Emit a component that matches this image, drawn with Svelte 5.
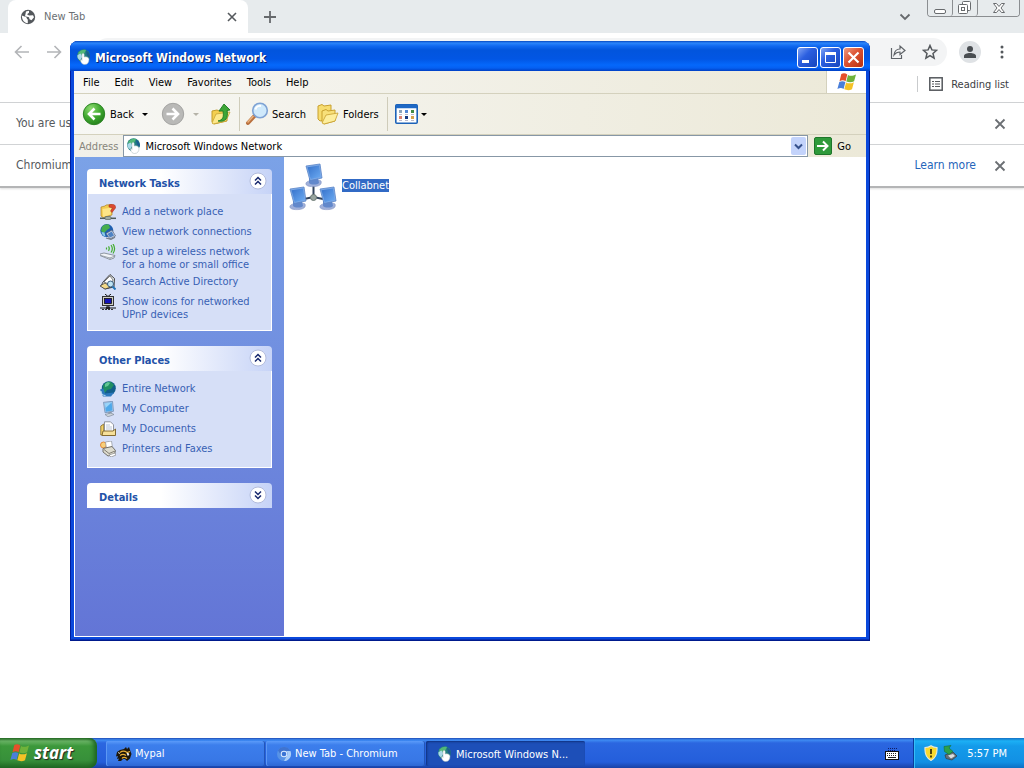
<script>
  const menus = ['File', 'Edit', 'View', 'Favorites', 'Tools', 'Help'];
  const panels = [
    {
      title: 'Network Tasks',
      open: true,
      items: [
        { icon: 'addplace', lines: ['Add a network place'] },
        { icon: 'connections', lines: ['View network connections'] },
        { icon: 'wireless', lines: ['Set up a wireless network', 'for a home or small office'] },
        { icon: 'directory', lines: ['Search Active Directory'] },
        { icon: 'upnp', lines: ['Show icons for networked', 'UPnP devices'] }
      ]
    },
    {
      title: 'Other Places',
      open: true,
      items: [
        { icon: 'entire', lines: ['Entire Network'] },
        { icon: 'computer', lines: ['My Computer'] },
        { icon: 'documents', lines: ['My Documents'] },
        { icon: 'printers', lines: ['Printers and Faxes'] }
      ]
    },
    { title: 'Details', open: false, items: [] }
  ];
  const tasks = [
    { icon: 'mypal', label: 'Mypal', active: false },
    { icon: 'chromium', label: 'New Tab - Chromium', active: false },
    { icon: 'network', label: 'Microsoft Windows N...', active: true }
  ];
  let address = $state('Microsoft Windows Network');
</script>

{#snippet closeX()}
  <svg width="12" height="12" viewBox="0 0 12 12" aria-hidden="true"><path d="M1.500 1.500l9 9M10.500 1.500l-9 9" stroke="#6b6f73" stroke-width="1.800" /></svg>
{/snippet}

{#snippet flag(size)}
  <svg width={size} height={size} viewBox="0 0 20 20" aria-hidden="true">
    <path d="M4.300 2C6.500 .8 8.500 1.200 10.300 2.400L8.600 9.200C6.700 8 4.800 8 2.500 9.200z" fill="#e5502a" />
    <path d="M11 2.900C13 4.100 15.700 4.200 19 2.500L17.100 9.300C14.700 10.600 11.700 10.400 9.300 9.500z" fill="#6fb23a" />
    <path d="M2.300 10C4.500 8.900 6.500 9 8.400 10.100L6.600 17C4.700 15.700 2.800 15.800 .4 17z" fill="#4a7fd9" />
    <path d="M9.100 10.500C11 11.600 13.900 11.800 16.900 10.200L15 17.200C12.500 18.600 9.500 18.300 7.300 17.300z" fill="#f4c226" />
  </svg>
{/snippet}

{#snippet icon(name)}
  <svg class="ico" width="16" height="16" viewBox="0 0 16 16" aria-hidden="true">
    {#if name === 'network'}
      <circle cx="7.500" cy="6.800" r="6.500" fill="#23807f" />
      <path d="M2 4C4 1 8 0 10 1L8 5 4 7z" fill="#52b878" />
      <path d="M10 1.500C13 3 14.500 6 13.500 9L11 7z" fill="#1b5c90" />
      <path d="M1.500 6l3-1.500 2 3-2.500 4C2 10 1 8.500 1.500 6z" fill="#a9d9e8" />
      <path d="M6 5.500c0-1.500 2.200-1.500 2.200 0V8c2-.6 4.800 0 4.800 2.500 0 3-1.500 5-4.500 5-2 0-3.500-1.500-4-4 0-1.500 1.500-1 1.500 0z" fill="#fff" stroke="#a5b4b8" stroke-width=".5" />
    {:else if name === 'addplace'}
      <path d="M1 3l4-1 1-1 6-.5V11L3 13.500 1 12z" fill="#f3cc50" stroke="#ae8326" stroke-width=".7" />
      <path d="M2.500 5L12 3.500l-1.500 7L3 13z" fill="#fde587" />
      <path d="M9 1c3-1.500 7-1 6.500 3L12 8.500 10.500 7 12.500 4 9 3z" fill="#dc4a30" stroke="#a12c20" stroke-width=".5" />
      <path d="M0 14.300h16" stroke="#4f5d5b" stroke-width="1.500" /><rect x="5" y="12.500" width="6" height="3" rx="1" fill="#9faba1" stroke="#4f5b55" stroke-width=".6" />
    {:else if name === 'connections'}
      <circle cx="6.800" cy="6.600" r="6.500" fill="#1e5fb0" />
      <path d="M2 2.800C5 0 8 0 9 .8l1 3.200-3 2-3 3-3-2z" fill="#47ad4d" />
      <path d="M1.500 8l3 .5 1 4C3 12 2 10.500 1.500 8z" fill="#8bcbe8" />
      <path d="M6 9.500L12 6l3.500 6-5.500 3z" fill="#cbd3e2" stroke="#54617e" stroke-width=".7" /><path d="M7.500 10l4.200-2.500 2.300 4-4 2z" fill="#4f83c4" />
      <path d="M6 14l5 1.300 4-2" stroke="#737c88" stroke-width="1.200" fill="none" />
    {:else if name === 'wireless'}
      <path d="M6.500 3.500v2M8.500 2.300c1 1.500 1 3 0 4.500M11 1c1.700 2.300 1.700 5 0 7.500M13 0c2 3 2 6.500 0 9.500" stroke="#43ac30" stroke-width="1.200" fill="none" />
      <path d="M0 10l4-1 11 2.500-1 2.500-4 1.500L0 11.500z" fill="#f0f3f6" stroke="#77808c" stroke-width=".8" /><path d="M1 11.500l9 2.500 5-2M10 13.500v2" stroke="#8b94a1" stroke-width=".8" fill="none" />
    {:else if name === 'directory'}
      <path d="M3 8l7-7.500 4.500 4L14 13l-9 2-4-3z" fill="#dfe3e4" stroke="#333" stroke-width=".9" />
      <path d="M4 8l6-6 3 4-2 5z" fill="#fff" stroke="#555" stroke-width=".7" /><path d="M0 12l5-3 6 4-6 2z" fill="#f3d988" stroke="#333" stroke-width=".7" />
      <circle cx="10.500" cy="10" r="3" fill="#bfe4f4" stroke="#294e75" stroke-width=".9" /><path d="M12.500 12.500l3 3" stroke="#2476b7" stroke-width="2" />
    {:else if name === 'upnp'}
      <path d="M5 0l3 2.500L11 0" stroke="#111" fill="none" /><rect x="2.500" y="2.500" width="11" height="9" fill="#cfcfc5" stroke="#333" /><rect x="4.500" y="4.500" width="7" height="5" fill="#1414b8" stroke="#111" stroke-width=".8" />
      <path d="M8 12v2M0 14h16" stroke="#111" /><path d="M2 15.500h12" stroke="#333" stroke-dasharray="2 1" /><rect x="6" y="12.500" width="4" height="2.500" fill="#222" />
    {:else if name === 'entire'}
      <circle cx="8.800" cy="7.300" r="7" fill="#125e8a" /><path d="M3 6C3 2 8 0 11 1l3 3-3 4-4 1-3 4z" fill="#218f62" /><path d="M5 3c2-2 4-2 5-1L8 5 5 6z" fill="#62c795" />
      <path d="M0 8.500l3.500-1 1.500 5 9-1-3 4H3z" fill="#2b78bd" /><path d="M1 10c0 3 2 4.500 4.500 4.500" stroke="#bce0f5" fill="none" />
    {:else if name === 'computer'}
      <path d="M3.500 1.300L12.500 .3l1 10-8.500 1.500z" fill="#a7c9ec" stroke="#6887ac" stroke-width=".7" /><path d="M4.800 2.300l6.800-.8.800 8-6.600 1.200z" fill="#4fa9ea" /><path d="M4.800 2.300l6.800-.8-6 5.500z" fill="#9bd4f8" />
      <path d="M8 11l3.500-.5.500 3-3 .5z" fill="#8e9cae" /><path d="M5 13.500l6-1.500 3 1.500-6 2.300z" fill="#cdd4dc" stroke="#75818f" stroke-width=".6" />
    {:else if name === 'documents'}
      <path d="M.8 5l3-2v11h-3z" fill="#f3d36a" stroke="#8f7430" stroke-width=".9" /><path d="M4.500 .8h6l3 3V12h-9z" fill="#fff" stroke="#7b7f88" stroke-width=".8" /><path d="M6 4h4M6 6h6M6 8h6" stroke="#a9b6cb" stroke-width=".8" />
      <path d="M3 10h10l2.500-2v6.500H2z" fill="#f6e09a" stroke="#846b31" />
    {:else if name === 'printers'}
      <circle cx="3.500" cy="4" r="3" fill="#f8cf7a" stroke="#df8130" stroke-width=".9" /><path d="M5.500 1l6-1 1 6.500-6 1z" fill="#fff" stroke="#8e939c" stroke-width=".7" />
      <path d="M3 7.500L12 5.500l3.500 4-1 4L8 15 3 11z" fill="#dddbce" stroke="#66645d" stroke-width=".9" /><path d="M4 8.500l5 4 6-2.500" stroke="#77746b" fill="none" stroke-width=".9" /><path d="M9 14l6-2 1 2-5 2z" fill="#fff" stroke="#777" stroke-width=".6" />
    {:else if name === 'mypal'}
      <path d="M1 6l3-2 4-1 2-2 1 2 2-2 1 3 1.500 4-1.500 4.500L11 15l-2-2H7l-2 2H2l1-2.500-2 .5 1-3-2 .5z" fill="#1d1609" /><path d="M4 6.500c2-1.500 5-1.500 7 0l3-1M4 9.500c2-1.500 4-1.500 6 0M6 12.500c1-1.500 3-1.500 5 0" stroke="#e8ad34" stroke-width="1.300" fill="none" /><path d="M11 7l2 1-1 1.500zM2 6.500l2 1" stroke="#fff" stroke-width=".8" fill="#fff" />
    {:else if name === 'chromium'}
      <circle cx="8" cy="8" r="7" fill="#5793e6" /><path d="M2 4.500A7 7 0 0114.300 5H8a3 3 0 00-2.700 4.500z" fill="#3f74d0" /><path d="M14.400 5A7 7 0 018 15l3-5.500A3 3 0 0010 5z" fill="#a9cdf8" /><circle cx="8" cy="8" r="3.300" fill="#dcebff" /><circle cx="8" cy="8" r="2.300" fill="#3973d4" />
    {:else if name === 'shield'}
      <path d="M8 .7C10 2 12 2.500 14 2.500 14.500 9 12 13.500 8 15.500 4 13.500 1.500 9 2 2.500 4 2.500 6 2 8 .7z" fill="#f9d92e" stroke="#e9eadd" stroke-width="1.100" /><path d="M8 4v5M8 10.500v2" stroke="#4a3b0a" stroke-width="1.900" />
    {:else if name === 'device'}
      <path d="M3 10l8-3 4 4-5 4-6-1.500z" fill="#667078" stroke="#343b43" stroke-width=".7" /><path d="M6 10.500l5-1.500 2 2-4 2.500z" fill="#d9dde0" /><path d="M2 1.500L9 .5 7 3l4 3.500L7 9.500 2.500 6.500z" fill="#2ca14b" stroke="#156e35" stroke-width=".6" />
    {:else if name === 'keyboard'}
      <rect x="1.500" y="6.500" width="13" height="8" fill="#fff" stroke="#111" /><path d="M3 8.500h10M3 10.500h10" stroke="#222" stroke-dasharray="1 1" /><path d="M4 12.500h8" stroke="#222" /><path d="M4 3.500h9M4 5.500h8" stroke="#101d65" stroke-dasharray="1 1" />
    {/if}
  </svg>
{/snippet}

<div class="screen">
  <main class="desktop">
    <section class="browser" aria-label="New Tab - Chromium">
      <div class="tabstrip">
        <div class="tab">
          <svg width="16" height="16" viewBox="0 0 16 16" aria-hidden="true"><circle cx="8" cy="8" r="7.200" fill="#54585c" /><path d="M1.800 6.500l4 1.500c1.500.5.500 2 2 2.500v3.700C4 14 2 11 1.800 6.500zM6 2.500l3-.7v2l-2 1.500 2 1.200 4-.3 1 2-2.500 3-2-1-.5-2-4-1z" fill="#fff" /></svg>
          <span class="tabname">New Tab</span>
          <button class="plain" aria-label="Close tab"><svg width="10" height="10" viewBox="0 0 10 10"><path d="M1 1l8 8M9 1L1 9" stroke="#55595d" stroke-width="1.600" /></svg></button>
        </div>
        <button class="plain newtab" aria-label="New tab"><svg width="14" height="14" viewBox="0 0 14 14"><path d="M7 1v12M1 7h12" stroke="#66696c" stroke-width="1.800" /></svg></button>
        <button class="plain tabsearch" aria-label="Search tabs"><svg width="12" height="8" viewBox="0 0 12 8"><path d="M1.500 1.500L6 6l4.500-4.500" stroke="#66696c" stroke-width="1.800" fill="none" /></svg></button>
        <div class="caption">
          <button aria-label="Minimize browser"><svg width="12" height="14" viewBox="0 0 12 14"><rect x=".5" y="8.500" width="11" height="4" rx="1.500" fill="#fff" stroke="#686b6e" /></svg></button>
          <button aria-label="Restore browser"><svg width="14" height="14" viewBox="0 0 14 14"><rect x="4.500" y=".5" width="8" height="9" rx="1" fill="#fff" stroke="#686b6e" /><rect x=".5" y="3.500" width="9" height="9" rx="1" fill="#fff" stroke="#686b6e" /><rect x="3.500" y="6.500" width="3" height="3" fill="#fff" stroke="#686b6e" /></svg></button>
          <button class="wide" aria-label="Close browser"><svg width="12" height="14" viewBox="0 0 12 14"><path d="M.5 2.500h3L6 5.500l2.500-3h3L8 7l3.500 4.500h-3L6 8.500l-2.500 3h-3L4 7z" fill="#fff" stroke="#686b6e" /></svg></button>
        </div>
      </div>
      <div class="navbar">
        <button class="plain" aria-label="Back"><svg width="16" height="14" viewBox="0 0 16 14"><path d="M15 7H2M7.500 1L1.500 7l6 6" stroke="#b3b5b8" stroke-width="1.600" fill="none" /></svg></button>
        <button class="plain" aria-label="Forward"><svg width="16" height="14" viewBox="0 0 16 14"><path d="M1 7h13M8.500 1l6 6-6 6" stroke="#b3b5b8" stroke-width="1.600" fill="none" /></svg></button>
        <div class="omnibox">
          <button class="plain" aria-label="Share"><svg width="16" height="16" viewBox="0 0 16 16"><path d="M1.500 4v10.500h10V11M4 11c.5-4 3-6 6-6V2l5 4.500-5 4V8c-3 0-4.500 1-6 3z" stroke="#5f6368" stroke-width="1.200" fill="none" /></svg></button>
          <button class="plain" aria-label="Bookmark"><svg width="16" height="16" viewBox="0 0 16 16"><path d="M8 1.500l1.900 4.400 4.700.4-3.600 3.100 1.100 4.700L8 11.600l-4.100 2.500L5 9.400 1.400 6.300l4.700-.4z" stroke="#54585c" stroke-width="1.500" fill="none" /></svg></button>
        </div>
        <button class="plain avatar" aria-label="Profile"><svg width="14" height="14" viewBox="0 0 14 14"><circle cx="7" cy="4" r="3" fill="#494d51" /><path d="M1 13V11c0-4 12-4 12 0v2z" fill="#494d51" /></svg></button>
        <button class="plain" aria-label="Menu"><svg width="4" height="14" viewBox="0 0 4 14"><g fill="#54585c"><circle cx="2" cy="2" r="1.500" /><circle cx="2" cy="7" r="1.500" /><circle cx="2" cy="12" r="1.500" /></g></svg></button>
      </div>
      <div class="bookmarks">
        <button class="plain reading"><svg width="14" height="14" viewBox="0 0 14 14" aria-hidden="true"><rect x=".8" y=".8" width="12.400" height="12.400" stroke="#55595d" stroke-width="1.500" fill="none" /><path d="M3 4.500h2M6 4.500h5M3 7h2M6 7h5M3 9.500h2M6 9.500h5" stroke="#55595d" stroke-width="1.200" /></svg>Reading list</button>
      </div>
      <div class="infobar"><span>You are us</span><button class="plain" aria-label="Dismiss">{@render closeX()}</button></div>
      <div class="infobar last"><span>Chromium</span><a href="#learn">Learn more</a><button class="plain" aria-label="Dismiss">{@render closeX()}</button></div>
    </section>

    <section class="window" aria-label="Microsoft Windows Network">
      <header class="titlebar">
        {@render icon('network')}
        <h1>Microsoft Windows Network</h1>
        <button class="ctl" aria-label="Minimize"><svg width="19" height="19" viewBox="0 0 19 19"><path d="M4 13.500h7" stroke="#fff" stroke-width="3" /></svg></button>
        <button class="ctl" aria-label="Maximize"><svg width="19" height="19" viewBox="0 0 19 19"><path d="M4.500 5v9.500h10V5" stroke="#fff" fill="none" /><path d="M4 5.500h11" stroke="#fff" stroke-width="3" /></svg></button>
        <button class="ctl red" aria-label="Close"><svg width="19" height="19" viewBox="0 0 19 19"><path d="M4.500 4.500l10 10M14.500 4.500l-10 10" stroke="#fff" stroke-width="2.200" /></svg></button>
      </header>
      <div class="frame">
        <div class="menubar">
          <nav>{#each menus as m}<button class="plain">{m}</button>{/each}</nav>
          <div class="brand">{@render flag(20)}</div>
        </div>
        <div class="toolbar">
          <button class="plain tool back">
            <svg width="24" height="24" viewBox="0 0 24 24" aria-hidden="true"><defs><radialGradient id="gb" cx=".35" cy=".25" r=".9"><stop offset="0" stop-color="#8fdc72" /><stop offset=".5" stop-color="#3fa82f" /><stop offset="1" stop-color="#1d7517" /></radialGradient></defs><circle cx="12" cy="12" r="10.700" fill="url(#gb)" stroke="#2c8424" /><path d="M18.500 12H7M12.500 6.500L7 12l5.500 5.500" stroke="#fff" stroke-width="2.600" fill="none" /></svg>
            Back<i class="caret"></i>
          </button>
          <button class="plain tool fwd" aria-label="Forward">
            <svg width="24" height="24" viewBox="0 0 24 24" aria-hidden="true"><circle cx="12" cy="12" r="10.700" fill="#b9b9b7" stroke="#a4a4a2" /><path d="M5.500 12H17M11.500 6.500L17 12l-5.500 5.500" stroke="#fff" stroke-width="2.600" fill="none" /></svg>
            <i class="caret off"></i>
          </button>
          <button class="plain tool up" aria-label="Up">
            <svg width="22" height="24" viewBox="0 0 22 24" aria-hidden="true"><path d="M2 9l5-1 2 1 8-1v11L4 22 2 20z" fill="#f3cf50" stroke="#c29b2b" /><path d="M2 21l4-9 14-2-4 9L3 22z" fill="#fde98c" stroke="#c9a534" stroke-width=".8" /><path d="M8 19c5-1 6-4 5-10H9l5-7 6 6-3 .5c1.500 7-1 12-9 10.500z" fill="#3da637" stroke="#1f7a22" stroke-width=".9" /></svg>
          </button>
          <span class="rule"></span>
          <button class="plain tool search">
            <svg width="24" height="24" viewBox="0 0 24 24" aria-hidden="true"><path d="M3 21l6.500-7" stroke="#b9703e" stroke-width="4" stroke-linecap="round" /><path d="M2.500 20.500l6-6.500" stroke="#eab27e" stroke-width="1.500" /><circle cx="15" cy="8.500" r="7.300" fill="#cfe9fb" stroke="#7fa3d4" stroke-width="1.600" /><path d="M10.500 7.500c.5-2.500 3-4 5.500-3.500" stroke="#fff" stroke-width="2" fill="none" /></svg>
            Search
          </button>
          <button class="plain tool folders">
            <svg width="24" height="22" viewBox="0 0 24 22" aria-hidden="true"><path d="M2 3l4-1.500L8 3l7-1v13L4 18 2 16z" fill="#f7dd70" stroke="#c8a02f" /><path d="M6 8l4-1.500L12 8l7-1v11L8 21 6 19z" fill="#f8e079" stroke="#c8a02f" /><path d="M6 20l4-8 12-2-3 8-11 3z" fill="#fdee9d" stroke="#c8a02f" stroke-width=".8" /></svg>
            Folders
          </button>
          <span class="rule"></span>
          <button class="plain tool views" aria-label="Views">
            <svg width="23" height="20" viewBox="0 0 23 20" aria-hidden="true"><rect x=".8" y=".8" width="21.400" height="18.400" rx="1" fill="#fff" stroke="#1c62b8" stroke-width="1.600" /><path d="M1 2.500h21" stroke="#1f69c5" stroke-width="3.500" /><g><rect x="4" y="6" width="3" height="3" fill="#8da4bb" /><rect x="10" y="6" width="3" height="3" fill="#5489d7" /><rect x="16" y="6" width="3" height="3" fill="#438b43" /><rect x="4" y="12" width="3" height="3" fill="#dc8171" /><rect x="10" y="12" width="3" height="3" fill="#183b82" /><rect x="16" y="12" width="3" height="3" fill="#d6a34c" /></g><path d="M4 16.500h3M10 16.500h3M16 16.500h3M4 10.500h3M10 10.500h3M16 10.500h3" stroke="#bbc" /></svg>
            <i class="caret"></i>
          </button>
        </div>
        <div class="addressbar">
          <label for="addr">Address</label>
          <div class="combo">
            {@render icon('network')}
            <input id="addr" type="text" bind:value={address} />
            <button class="drop" aria-label="Show addresses"><svg width="9" height="7" viewBox="0 0 9 7"><path d="M1 1.500L4.500 5 8 1.500" stroke="#35508c" stroke-width="2" fill="none" /></svg></button>
          </div>
          <button class="plain go"><svg width="18" height="18" viewBox="0 0 18 18" aria-hidden="true"><rect x=".5" y=".5" width="17" height="17" rx="1.500" fill="#2f9a3b" stroke="#1f762b" /><path d="M3 9h10.500M9 4.500L13.500 9 9 13.500" stroke="#fff" stroke-width="2" fill="none" /></svg>Go</button>
        </div>
        <div class="content">
          <aside>
            {#each panels as p}
              <section class="panel">
                <h2><span>{p.title}</span>
                  <button class="chev" aria-label={p.open ? 'Collapse' : 'Expand'}><svg width="18" height="18" viewBox="0 0 18 18"><circle cx="9" cy="9" r="8" fill="#fff" stroke="#b3bcdc" />{#if p.open}<path d="M6 8.500l3-3 3 3M6 12.500l3-3 3 3" stroke="#17286e" stroke-width="1.500" fill="none" />{:else}<path d="M6 5.500l3 3 3-3M6 9.500l3 3 3-3" stroke="#17286e" stroke-width="1.500" fill="none" />{/if}</svg></button>
                </h2>
                {#if p.open}
                  <ul>
                    {#each p.items as it}
                      <li>{@render icon(it.icon)}<a href="#item">{#each it.lines as line}<span>{line}</span>{/each}</a></li>
                    {/each}
                  </ul>
                {/if}
              </section>
            {/each}
          </aside>
          <div class="files">
            <button class="plain file">
              <svg width="48" height="48" viewBox="0 0 48 48" aria-hidden="true">
                <defs>
                  <linearGradient id="scr" x1="0" y1="0" x2="1" y2="1"><stop offset="0" stop-color="#3672cb" /><stop offset="1" stop-color="#6cabf2" /></linearGradient>
                  <g id="pc"><path d="M1 20c1-3 13-4 15-2 1 3-1 5-6 5.500S0 23 1 20z" fill="#9fb0da" stroke="#8496c4" stroke-width=".6" /><path d="M4 15h9l1 5c-2 2-8 2-10 0z" fill="#6288cb" /><path d="M1 3l14-2 2 14-12 2.500z" fill="#7eaae6" stroke="#5a85c8" stroke-width=".8" /><path d="M2.500 4.200l11.600-1.600 1.600 11.300-10 2z" fill="url(#scr)" /></g>
                </defs>
                <path d="M24.500 22v12M15 36l9.500-2 9.500 2" stroke="#33445c" stroke-width="2" fill="none" /><circle cx="24.500" cy="34.500" r="3" fill="#98a59f" stroke="#6d7a75" />
                <use href="#pc" x="16" y="0" /><use href="#pc" x="0" y="23" /><use href="#pc" x="30" y="23" />
              </svg>
              <span>Collabnet</span>
            </button>
          </div>
        </div>
      </div>
    </section>
  </main>

  <footer class="taskbar">
    <button class="start">{@render flag(20)}<span>start</span></button>
    <div class="tasks">
      {#each tasks as t}
        <button class="task" class:active={t.active}>{@render icon(t.icon)}<span>{t.label}</span></button>
      {/each}
    </div>
    <button class="plain lang" aria-label="Keyboard">{@render icon('keyboard')}</button>
    <div class="tray">{@render icon('shield')}{@render icon('device')}<time>5:57 PM</time></div>
  </footer>
</div>

<style>
  :global(body) { margin: 0; }
  .screen {
    height: 100vh;
    display: flex;
    flex-direction: column;
    font: 11px/13px Tahoma, "DejaVu Sans Condensed", "Noto Sans", sans-serif;
    color: #000;
    background: #fff;
    overflow: hidden;
  }
  button, input { font: inherit; color: inherit; }
  button { cursor: default; }
  svg { display: block; flex: none; }
  .plain { border: 0; background: none; padding: 0; display: flex; align-items: center; }
  .desktop { flex: 1; position: relative; min-height: 0; }

  .tabstrip { display: flex; height: 33px; background: #e7ebed; padding-left: 8px; align-items: center; }
  .tab { width: 240px; box-sizing: border-box; height: 33px; background: #fff; border-radius: 8px 8px 0 0; display: flex; align-items: center; gap: 8px; padding: 0 11px 0 12px; color: #6b6f73; }
  .tabname { flex: 1; }
  .newtab { margin-left: 15px; }
  .tabsearch { margin-left: auto; }
  .caption { display: flex; align-self: flex-start; margin: 0 4px 0 16px; border: 1px solid #8b8e91; border-top: 0; border-radius: 0 0 4px 4px; }
  .caption button { box-sizing: border-box; width: 25px; height: 16px; padding: 0; border: 0; border-right: 1px solid #8b8e91; background: #e7ebed; display: flex; align-items: center; justify-content: center; border-radius: 0 0 3px 3px; }
  .caption .wide { width: 41px; border-right: 0; }
  .navbar { display: flex; align-items: center; height: 38px; padding: 0 20px 0 14px; gap: 16px; }
  .omnibox { flex: 1; height: 28px; margin-left: 16px; border-radius: 14px; background: #f3f4f5; display: flex; align-items: center; justify-content: flex-end; gap: 16px; padding-right: 9px; }
  .avatar { width: 22px; height: 22px; margin: 0 3px 0 -4px; border-radius: 50%; background: #dfe2e5; justify-content: center; }
  .bookmarks { display: flex; justify-content: flex-end; align-items: center; height: 31px; padding: 0 15px 0 0; border-bottom: 1px solid #d0d2d4; color: #3c4043; }
  .reading { gap: 8px; border-left: 1px solid #c9cbcd; padding: 0 0 0 11px; height: 16px; margin-bottom: 5px; }
  .infobar { display: flex; align-items: center; height: 41px; padding: 0 18px 0 16px; border-bottom: 1px solid #d0d2d4; font-size: 12px; color: #55595d; }
  .infobar span { flex: 1; }
  .infobar a { color: #2565ba; text-decoration: none; margin-right: 18px; }
  .infobar.last { border-bottom: 2px solid #b4b5b6; box-shadow: 0 1px 2px #ddd; }

  .window {
    position: absolute;
    top: 41px;
    left: 70px;
    right: 154px;
    bottom: 97px;
    box-sizing: border-box;
    display: flex;
    flex-direction: column;
    padding: 0 4px 4px;
    border-radius: 8px 8px 0 0;
    background: #0a48dc;
    box-shadow: inset 1px 0 #001e9e, inset -1px -1px #001a8c, inset 0 -2px #0930b4;
  }
  .titlebar { display: flex; align-items: center; height: 30px; margin: 0 -4px; padding: 2px 6px 0; box-sizing: border-box; gap: 2px; border-radius: 8px 8px 0 0; background: linear-gradient(#0648c0 0, #2c86fb 2px, #1169f0 5px, #0255dd 9px, #0256e4 18px, #0568fb 24px, #0560f2 27px, #003fc4 30px); }
  h1 { flex: 1; margin: 0 0 0 1px; padding-top: 2px; color: #fff; font: bold 12px/16px "Trebuchet MS", "DejaVu Sans Condensed", sans-serif; text-shadow: 1px 1px #0a246a; white-space: nowrap; }
  .ctl { padding: 0; width: 21px; height: 21px; border: 1px solid #fff; border-radius: 3px; background: linear-gradient(135deg, #80a4f5, #2b5fe0 40%, #1746bd); }
  .ctl.red { background: linear-gradient(135deg, #ee9b81, #dc5233 45%, #b8300f); }
  .frame { flex: 1; display: flex; flex-direction: column; min-height: 0; background: #efeee2; }
  .menubar { display: flex; height: 22px; border-bottom: 1px solid #d4d1bd; background: linear-gradient(90deg, #f7f7f5, #ece9d8); }
  nav { flex: 1; display: flex; align-items: center; gap: 15px; padding-left: 9px; }
  .brand { width: 39px; background: #fff; border-left: 1px solid #d4d1bd; display: flex; align-items: center; justify-content: center; }
  .toolbar { display: flex; align-items: center; height: 40px; padding-left: 8px; background: linear-gradient(90deg, #f7f7f4, #ece9d8); border-bottom: 1px solid #d4d1bd; }
  .tool { gap: 4px; }
  .caret { width: 0; height: 0; border: 3px solid transparent; border-top-color: #000; border-bottom: 0; margin-left: 4px; }
  .back { margin-right: 13px; }
  .caret.off { border-top-color: #b5b3a8; }
  .up { margin: 0 7px 0 11px; }
  .rule { width: 1px; align-self: stretch; margin: 3px 0; background: #cfccba; }
  .search { margin: 0 10px 0 5px; }
  .search, .folders { gap: 3px; }
  .folders { margin-right: 8px; }
  .views { margin-left: 7px; gap: 0; }
  .views .caret { margin-left: 3px; }
  .addressbar { display: flex; align-items: center; height: 22px; padding-left: 5px; background: linear-gradient(90deg, #f2f1ea, #ece9d8); color: #000; }
  .addressbar label { color: #87857b; margin-right: 5px; }
  .combo { flex: 1; min-width: 0; box-sizing: border-box; height: 22px; display: flex; align-items: center; background: #fff; border: 1px solid #8797a6; padding: 0 1px 0 2px; gap: 3px; }
  .combo input { flex: 1; min-width: 0; border: 0; padding: 1px 0 0; background: none; outline: 0; }
  .drop { width: 15px; height: 18px; border: 0; border-radius: 2px; padding: 0; background: #c3d3fb; display: flex; align-items: center; justify-content: center; }
  .go { gap: 5px; margin: 0 15px 0 6px; }
  .content { flex: 1; display: flex; min-height: 0; background: #fff; border: solid #fff; border-width: 0 0 1px 1px; }
  aside { width: 209px; box-sizing: border-box; padding: 12px 12px 0; display: flex; flex-direction: column; gap: 15px; background: linear-gradient(#7ba2e7, #6375d6); }
  h2 { display: flex; align-items: center; justify-content: space-between; margin: 0; height: 25px; padding: 0 5px 0 12px; font: bold 11px/13px Tahoma, "DejaVu Sans Condensed", sans-serif; color: #2352a8; background: linear-gradient(90deg, #fff 40%, #c6d3f7); border-radius: 4px 4px 0 0; }
  h2 span { padding-top: 3px; }
  .chev { border: 0; padding: 0 0 2px; background: none; }
  ul { list-style: none; margin: 0; padding: 10px 12px; border: 1px solid #fff; border-top: 0; background: #d6dff7; display: flex; flex-direction: column; gap: 4px; }
  li { display: flex; gap: 6px; min-height: 16px; }
  li a { margin: 1px 0 -1px; color: #3861b4; text-decoration: none; white-space: nowrap; }
  li a span { display: block; }
  .files { flex: 1; padding: 6px 5px; }
  .file { gap: 5px; }
  .file span { background: #316ac5; color: #fff; margin-bottom: 3px; }

  .taskbar { display: flex; height: 30px; background: linear-gradient(#1f4bb5 0, #3f8cf3 2px, #2b66e0 5px, #245edb 24px, #1941a5 30px); }
  .start { width: 97px; padding: 0 0 0 10px; gap: 4px; border: 0; border-radius: 0 8px 8px 0; display: flex; align-items: center; color: #fff; background: linear-gradient(#2d7029 0, #6bb567 3px, #3c983b 8px, #37903a 22px, #226a24 30px); box-shadow: inset -3px 0 4px #1d6421; font: italic bold 17px/20px "Trebuchet MS", "Open Sans", "Noto Sans", sans-serif; text-shadow: 1px 1px 1px #222; }
  .tasks { flex: 1; display: flex; gap: 1px; padding: 3px 0 2px 9px; }
  .task { width: 159px; box-sizing: border-box; display: flex; align-items: center; gap: 3px; padding: 0 10px; border: 0; border-radius: 2px; color: #fff; background: linear-gradient(#5b9bfa, #3c7eec 4px, #3877e6 20px, #2e68d4); box-shadow: inset 1px 0 #5c98f4, inset -1px 0 #2356b8; white-space: nowrap; }
  .task.active { padding: 1px 9px 0 11px; background: #1d4fb8; box-shadow: inset 1px 1px 2px #10327f; }
  .lang { margin-right: 13px; }
  .tray { display: flex; align-items: center; gap: 3px; padding: 0 17px 0 9px; color: #fff; border-left: 1px solid #0a3c9c; background: linear-gradient(#1470c4 0, #1cb0f5 3px, #149bea 8px, #1290e4 24px, #0d6fc4 30px); box-shadow: inset 1px 0 #36bef8; }
  .tray time { margin-left: 6px; }
</style>
